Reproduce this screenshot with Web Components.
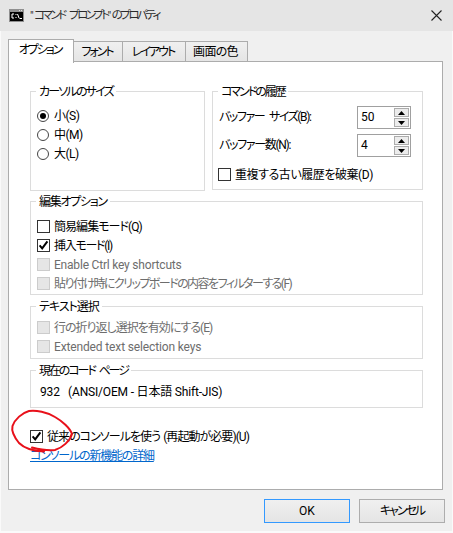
<!DOCTYPE html>
<html lang="ja"><head><meta charset="utf-8"><style>
html,body{margin:0;padding:0;background:#f0f0f0}
body{font:12px/17px Roboto,"Noto Sans CJK JP",sans-serif;font-feature-settings:"palt";color:#000;width:453px;height:533px;overflow:hidden}
.q{letter-spacing:.4px}
</style></head><body>
<x-dialog>
<x-titlebar style="font-size:11.500px;letter-spacing:-2.500px;word-spacing:4px"><span class="q">"</span>コマンド プロンプト<span class="q">"</span>のプロパティ</x-titlebar>
<x-tabs><x-tab active w="66" style="letter-spacing:-2px">オプション</x-tab><x-tab w="50" style="letter-spacing:-2px">フォント</x-tab><x-tab w="64" style="letter-spacing:-2px">レイアウト</x-tab><x-tab w="63" style="letter-spacing:-.7px">画面の色</x-tab></x-tabs>
<x-panel>
 <x-row>
  <x-group legend="カーソルのサイズ" ls="-1.8" style="width:175px;height:108px" pad="6px 6px 0 6px">
   <x-radio checked>小(S)</x-radio><x-radio>中(M)</x-radio><x-radio>大(L)</x-radio>
  </x-group>
  <x-group legend="コマンドの履歴" ls="-2" style="width:211px;height:107px" pad="3.5px 11px 0 6px">
   <x-spinrow value="50" style="--ls:-1.4px;word-spacing:3px">バッファー サイズ(B):</x-spinrow>
   <x-spinrow value="4" style="--ls:-1.3px">バッファー数(N):</x-spinrow>
   <x-check style="margin:5.5px 0 0 -1px;letter-spacing:-.45px">重複する古い履歴を破棄(D)</x-check>
  </x-group>
 </x-row>
 <x-group legend="編集オプション" ls="-1.3" style="height:102px;margin-top:2px" pad="7px 6px 0 6px">
  <x-check style="letter-spacing:-.95px">簡易編集モード(Q)</x-check><x-check checked style="letter-spacing:-1.3px">挿入モード(I)</x-check>
  <x-check disabled style="letter-spacing:-.2px">Enable Ctrl key shortcuts</x-check><x-check disabled style="letter-spacing:-1.55px">貼り付け時にクリップボードの内容をフィルターする(F)</x-check>
 </x-group>
 <x-group legend="テキスト選択" ls="-1" style="height:61px;margin-top:3px" pad="3px 6px 0 6px">
  <x-check disabled style="letter-spacing:-1px">行の折り返し選択を有効にする(E)</x-check><x-check disabled style="letter-spacing:-.14px">Extended text selection keys</x-check>
 </x-group>
 <x-group legend="現在のコード ページ" ls="-2.1" ws="3" style="height:46px;margin-top:3px" pad="5px 8px 0 9px"><span style="letter-spacing:-.18px">932&nbsp;&nbsp;&nbsp;(ANSI/OEM - 日本語 Shift-JIS)</span></x-group>
 <x-check checked style="margin:19px 0 0 0;letter-spacing:-.95px;word-spacing:1px">従来のコンソールを使う (再起動が必要)(U)</x-check>
 <x-link style="letter-spacing:-1.2px">コンソールの新機能の詳細</x-link>
</x-panel>
<x-footer><x-button primary>OK</x-button><x-button style="letter-spacing:-2px">キャンセル</x-button></x-footer>
<x-scribble></x-scribble>
</x-dialog>
<script>
function def(name,css,html,extra){
  customElements.define(name,class extends HTMLElement{
    constructor(){super();this.attachShadow({mode:'open'})}
    connectedCallback(){
      const h=typeof html==='function'?html(this):html;
      this.shadowRoot.innerHTML='<style>'+css+'</style>'+h;
      if(extra)extra(this);
    }
  });
}
def('x-dialog',':host{display:block;position:relative;width:453px;height:533px;background:#f0f0f0;overflow:hidden;box-shadow:inset 1px 0 #fafafa,inset -1px 0 #fafafa,inset 0 -2px #fafafa}','<slot></slot>');
def('x-titlebar',':host{display:flex;align-items:center;height:31px;background:#e5e5e5;padding:0 0 0 9px;box-sizing:border-box;color:#2b2b2b}svg{display:block;flex:none}.t{margin-left:6px;flex:1;margin-top:-1px}.x{margin-right:11px}',
 '<svg width="15" height="13" viewBox="0 0 15 13"><rect width="15" height="13" fill="#8f8f8f"/><rect x="1" y="3" width="13" height="9" fill="#000"/><path d="M10 1.500h1M12 1.500h1" stroke="#ddd"/><path d="M5 5H3v4h2M6.500 5.500h1M6.500 8.500h1M8.500 5l1.500 4M10.500 9.500h2.500" stroke="#fff" fill="none"/></svg><span class="t"><slot></slot></span><svg class="x" width="11" height="11" viewBox="0 0 11 11"><path d="M.5.5l10 10M10.5.5l-10 10" stroke="#222" stroke-width="1.1"/></svg>');
def('x-tabs',':host{display:flex;align-items:flex-end;height:22px;margin-top:8px;padding-left:8px;position:relative;z-index:1}','<slot></slot>');
def('x-tab',':host{display:flex;align-items:center;justify-content:center;box-sizing:border-box;height:21px;margin-bottom:-1px;margin-left:-1px;padding:1px 2px 0 0;background:linear-gradient(#f0f0f0,#e5e5e5);border:1px solid #acacac}:host(:first-child){margin-left:0}:host([active]){height:24px;margin-bottom:-2px;background:#fff;border-bottom:0;z-index:2;padding:0 2px 3px 0}',
 '<slot></slot>',el=>{el.style.width=el.getAttribute('w')+'px'});
def('x-panel',':host{display:block;box-sizing:border-box;width:435px;height:429px;margin-left:8px;background:#fff;border:1px solid #acacac;padding:21px 19px 0 21px}','<slot></slot>');
def('x-row',':host{display:flex;justify-content:space-between;align-items:flex-start}','<slot></slot>');
def('x-group',':host{display:block;box-sizing:border-box}fieldset{box-sizing:border-box;height:100%;margin:0;border:1px solid #dcdcdc;padding:0;min-width:0}legend{padding:1px 3px 0;margin-left:5px;line-height:16px}.c{display:block}',
 el=>`<fieldset><legend style="letter-spacing:${el.getAttribute('ls')||0}px;word-spacing:${el.getAttribute('ws')||0}px">${el.getAttribute('legend')}</legend><div class="c" style="padding:${el.getAttribute('pad')||0}"><slot></slot></div></fieldset>`);
def('x-radio',':host{display:flex;align-items:center;height:19px;gap:5px;letter-spacing:-.5px}svg{display:block;flex:none}.l{padding-top:1px}',
 el=>`<svg width="12" height="12" viewBox="0 0 12 12"><circle cx="6" cy="6" r="5.5" fill="#fff" stroke="#444"/>${el.hasAttribute('checked')?'<circle cx="6" cy="6" r="3" fill="#000"/>':''}</svg><span class="l"><slot></slot></span>`);
def('x-check',':host{display:flex;align-items:center;height:19px;gap:4px}:host([disabled]){color:#6d6d6d}.b{box-sizing:border-box;width:13px;height:13px;border:1px solid #333;background:#fff;flex:none;display:block}:host([disabled]) .b{border-color:#ccc;background:#e6e6e6}svg{display:block}.l{padding-top:1px}',
 el=>`<span class="b">${el.hasAttribute('checked')?'<svg width="11" height="11" viewBox="0 0 11 11"><path d="M1.6 5.4l2.6 3 5.2-7" fill="none" stroke="#000" stroke-width="2"/></svg>':''}</span><span class="l"><slot></slot></span>`);
def('x-spinrow',':host{display:flex;align-items:center;justify-content:space-between;height:28px}.n{letter-spacing:var(--ls,0)}.i{box-sizing:border-box;width:54px;height:23px;border:1px solid #a0a0a0;background:#fff;display:flex;align-items:center;padding-left:3px}.s{margin-left:auto;margin-right:1px;display:flex;flex-direction:column;gap:1px}.s i{box-sizing:border-box;display:flex;align-items:center;justify-content:center;width:15px;height:9px;background:#ececec;border:1px solid #acacac}svg{display:block}',
 el=>`<span class="n"><slot></slot></span><span class="i">${el.getAttribute('value')}<span class="s"><i><svg width="7" height="4"><path d="M3.500 0L7 4H0z"/></svg></i><i><svg width="7" height="4"><path d="M0 0h7L3.500 4z"/></svg></i></span></span>`);
def('x-link',':host{display:block;color:#0066cc;text-decoration:underline;height:19px;line-height:19px;margin-top:1px;width:max-content}','<slot></slot>');
def('x-footer',':host{display:flex;justify-content:flex-end;gap:9px;padding:9px 8px 0 0}','<slot></slot>');
def('x-button',':host{display:flex;align-items:center;justify-content:center;box-sizing:border-box;width:86px;height:24px;background:linear-gradient(#f0f0f0,#e5e5e5);border:1px solid #adadad}:host([primary]){border-color:#3399ff}','<slot></slot>');
def('x-scribble',':host{display:block;position:absolute;left:0;top:0;width:453px;height:533px;pointer-events:none}svg{display:block}',
 '<svg width="453" height="533" viewBox="0 0 453 533"><path d="M32 447.500C38 449 46 451 55 450C62 448 70 441 72 434C70 428 62 421 55 417C47 412 36 410 29 411C22 413 15 419 12.500 426C11 432 15 438 19 443C24 448 33 451 44 451.500" fill="none" stroke="#e8101a" stroke-width="2" stroke-linecap="round"/></svg>');
</script>
</body></html>
